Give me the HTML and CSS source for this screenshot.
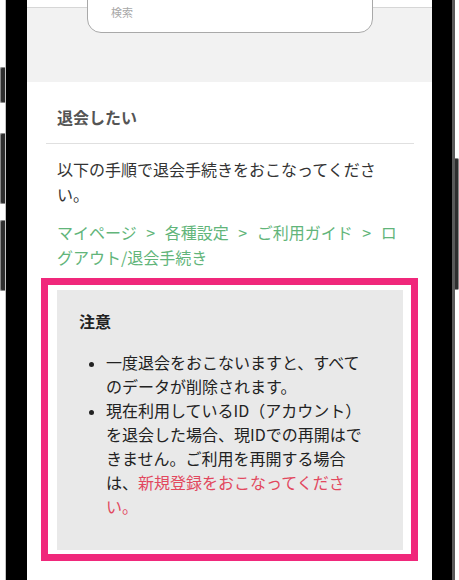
FILE: index.html
```html
<!DOCTYPE html>
<html lang="ja">
<head>
<meta charset="utf-8">
<title>退会したい</title>
<link rel="stylesheet" href="styles.css">
</head>
<body>
<div class="device">
  <div class="buttons buttons-left">
    <span class="btn btn-mute"></span>
    <span class="btn btn-vol1"></span>
    <span class="btn btn-vol2"></span>
  </div>
  <div class="bezel bezel-left"></div>
  <div class="screen">
    <div class="topbar"></div>
    <div class="search-area">
      <div class="search-box">検索</div>
    </div>
    <div class="content">
      <h2 class="title">退会したい</h2>
      <p class="text">以下の手順で退会手続きをおこなってください。</p>
      <p class="path">マイページ &gt; 各種設定 &gt; ご利用ガイド &gt; ログアウト/退会手続き</p>
      <div class="highlight">
        <div class="notice">
          <div class="notice-title">注意</div>
          <ul class="notice-list">
            <li>一度退会をおこないますと、すべてのデータが削除されます。</li>
            <li>現在利用しているID（アカウント）を退会した場合、現IDでの再開はできません。ご利用を再開する場合は、<span class="red">新規登録をおこなってください。</span></li>
          </ul>
        </div>
      </div>
    </div>
  </div>
  <div class="bezel bezel-right"></div>
  <div class="buttons buttons-right">
    <span class="btn btn-power"></span>
  </div>
</div>
</body>
</html>
```
FILE: styles.css
```css
* { box-sizing: border-box; }
html, body {
  margin: 0;
  padding: 0;
  background: #ffffff;
}
body {
  width: 459px;
  height: 580px;
  overflow: hidden;
  font-family: "Noto Sans CJK JP", "Noto Sans", sans-serif;
  color: #333;
}
.device {
  display: flex;
  height: 580px;
}
.buttons {
  display: flex;
  flex-direction: column;
}
.buttons-left { width: 5px; }
.buttons-right { width: 4px; }
.btn {
  display: block;
  background: #2e2e2e;
  border: 1px solid #8a8a8a;
}
.buttons-left .btn { width: 5px; border-right: none; border-radius: 2px 0 0 2px; }
.buttons-right .btn { width: 4px; border-left: none; border-radius: 0 2px 2px 0; }
.btn-mute { margin-top: 67px; height: 36px; }
.btn-vol1 { margin-top: 30px; height: 71px; }
.btn-vol2 { margin-top: 16px; height: 71px; }
.btn-power { margin-top: 158px; height: 132px; }
.bezel { height: 580px; }
.bezel-left {
  width: 22px;
  background: #000;
  border-left: 1px solid #c4c4c4;
}
.bezel-right {
  width: 23px;
  background: #000;
  border-right: 3px solid #5a5a5a;
}
.screen {
  width: 405px;
  height: 580px;
  background: #fff;
  display: flex;
  flex-direction: column;
  overflow: hidden;
}
.topbar {
  height: 8px;
  background: #fff;
  border-bottom: 1px solid #d6d6d6;
  flex: none;
}
.search-area {
  display: flow-root;
  height: 74px;
  background: #f2f2f2;
  flex: none;
}
.search-box {
  margin: -39px 59px 0 60px;
  height: 64px;
  background: #fff;
  border: 1.5px solid #a9a9a9;
  border-radius: 14px;
  padding: 34px 0 0 23px;
  font-size: 11px;
  line-height: 16px;
  color: #a8a8a8;
}
.content {
  padding: 0 18px 0 19px;
  flex: 1;
}
.title {
  margin: 23px 0 0;
  padding: 0 11px 14px;
  font-size: 16px;
  line-height: 24px;
  font-weight: 700;
  color: #555;
  border-bottom: 1px solid #e0e0e0;
}
.text {
  margin: 13px 0 0;
  padding: 0 11px;
  font-size: 16px;
  line-height: 25px;
  color: #333;
}
.path {
  margin: 13px 0 0;
  padding: 0 11px;
  font-size: 16px;
  line-height: 25px;
  word-spacing: 6px;
  color: #62b57a;
}
.highlight {
  margin: 8px -4px 0 -5px;
  border: 7px solid #f0287b;
  padding: 5px 8px 4px 9px;
  background: #fff;
}
.notice {
  background: #e9e9e9;
  padding: 19px 30px 32px 22px;
  color: #222;
}
.notice-title {
  font-size: 16px;
  line-height: 24px;
  font-weight: 700;
}
.notice-list {
  margin: 17px 0 0;
  padding: 0 0 0 27px;
  font-size: 16px;
  line-height: 24px;
}
.notice-list li::marker { font-size: 14px; }
.red { color: #e2485e; }
```
